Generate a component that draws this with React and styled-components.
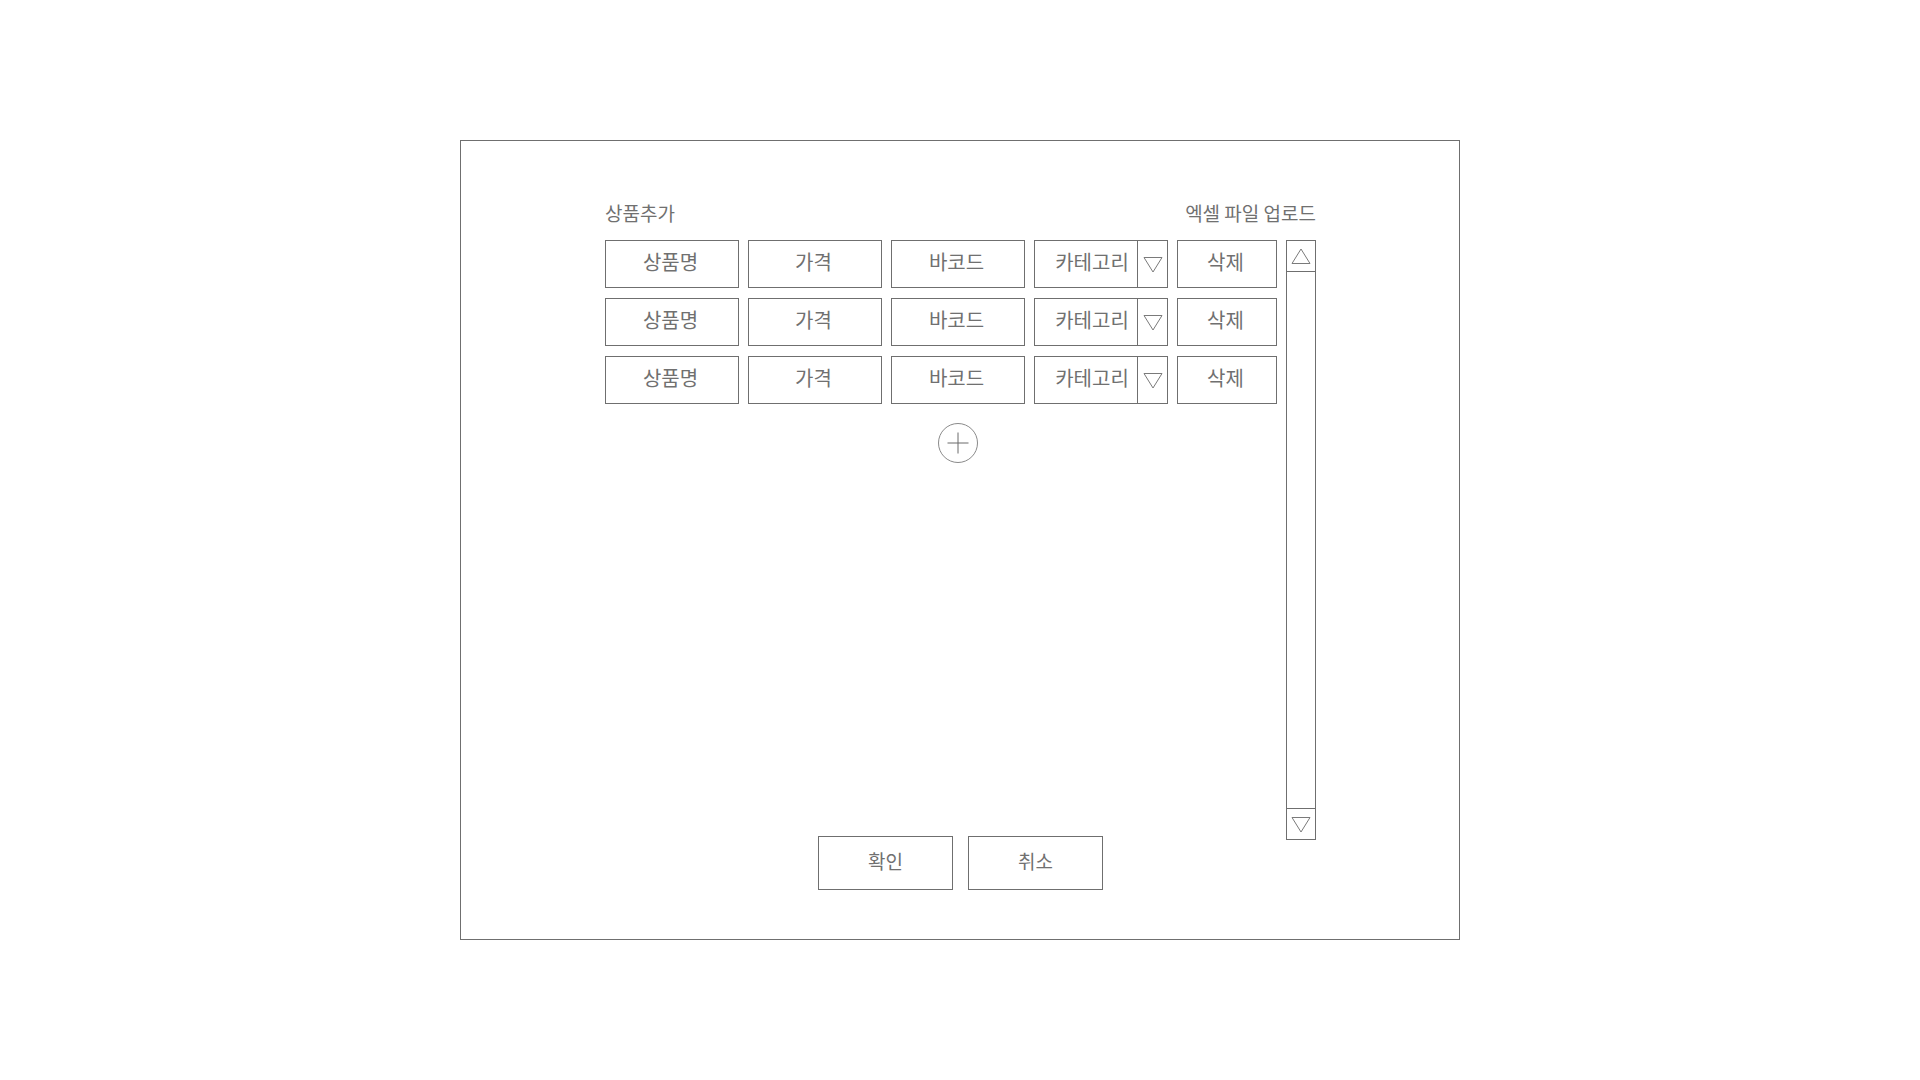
import React from "react";
import styled, { createGlobalStyle } from "styled-components";

const GlobalStyle = createGlobalStyle`
  html, body {
    margin: 0;
    padding: 0;
    background: #ffffff;
  }
  body {
    font-family: "Noto Sans CJK KR", "Noto Sans", sans-serif;
    color: #707070;
  }
  * {
    box-sizing: border-box;
  }
`;

const Page = styled.div`
  width: 100vw;
  height: 100vh;
  display: flex;
  align-items: center;
  justify-content: center;
`;

const Panel = styled.section`
  width: 1000px;
  height: 800px;
  border: 1px solid #6f6f6f;
  padding: 59px 144px 49px;
  display: grid;
  grid-template-columns: 1fr 30px;
  grid-template-rows: auto 1fr auto;
  column-gap: 9px;
`;

const Header = styled.div`
  grid-column: 1 / -1;
  grid-row: 1;
  display: flex;
  justify-content: space-between;
  align-items: center;
  height: 26px;
  margin-bottom: 14px;
  font-size: 19px;
  line-height: 26px;
  color: #707070;
`;

const HeaderTitle = styled.span``;

const UploadLink = styled.span`
  cursor: pointer;
`;

const List = styled.div`
  grid-column: 1;
  grid-row: 2;
  display: flex;
  flex-direction: column;
  gap: 10px;
`;

const Row = styled.div`
  display: grid;
  grid-template-columns: 134px 134px 134px 134px 100px;
  column-gap: 9px;
`;

const Cell = styled.div`
  height: 48px;
  border: 1px solid #6f6f6f;
  display: flex;
  align-items: center;
  justify-content: center;
  font-size: 20px;
  padding: 0 3px 5px 0;
  color: #707070;
  cursor: ${(p) => (p.$button ? "pointer" : "text")};
`;

const SelectBox = styled.div`
  height: 48px;
  border: 1px solid #6f6f6f;
  display: flex;
  font-size: 20px;
  color: #707070;
`;

const SelectLabel = styled.div`
  flex: 1;
  display: flex;
  align-items: center;
  justify-content: center;
  padding: 0 0 5px 12px;
`;

const SelectArrow = styled.div`
  width: 30px;
  border-left: 1px solid #6f6f6f;
  display: flex;
  align-items: center;
  justify-content: center;
  padding-top: 1px;
`;

const AddRow = styled(Row)`
  margin-top: 9px;
`;

const AddButton = styled.button`
  grid-column: 3;
  justify-self: center;
  width: 40px;
  height: 40px;
  border-radius: 50%;
  border: 1px solid #8a8a8a;
  background: #ffffff;
  padding: 0;
  display: flex;
  align-items: center;
  justify-content: center;
  cursor: pointer;
`;

const Scrollbar = styled.div`
  grid-column: 2;
  grid-row: 2 / 4;
  align-self: start;
  height: 600px;
  border: 1px solid #6f6f6f;
  display: flex;
  flex-direction: column;
`;

const ScrollButton = styled.div`
  height: 31px;
  display: flex;
  align-items: center;
  justify-content: center;
  border-top: ${(p) => (p.$bottom ? "1px solid #6f6f6f" : "none")};
  border-bottom: ${(p) => (p.$bottom ? "none" : "1px solid #6f6f6f")};
`;

const ScrollTrack = styled.div`
  flex: 1;
`;

const Footer = styled.div`
  grid-column: 1 / -1;
  grid-row: 3;
  display: flex;
  justify-content: center;
  gap: 15px;
`;

const FooterButton = styled.button`
  width: 135px;
  height: 54px;
  border: 1px solid #6f6f6f;
  background: #ffffff;
  font-family: "Noto Sans CJK KR", "Noto Sans", sans-serif;
  font-size: 19px;
  color: #707070;
  padding: 0 0 6px;
  cursor: pointer;
`;

const TriangleDown = () => (
  <svg width="20" height="17" viewBox="0 0 20 17">
    <polygon points="1,1.5 19,1.5 10,16" fill="none" stroke="#7a7a7a" strokeWidth="1" />
  </svg>
);

const TriangleUp = () => (
  <svg width="20" height="17" viewBox="0 0 20 17">
    <polygon points="10,1 19,15.5 1,15.5" fill="none" stroke="#7a7a7a" strokeWidth="1" />
  </svg>
);

const PlusIcon = () => (
  <svg width="22" height="22" viewBox="0 0 22 22">
    <line x1="11" y1="0.5" x2="11" y2="21.5" stroke="#6a6a6a" strokeWidth="1" />
    <line x1="0.5" y1="11" x2="21.5" y2="11" stroke="#6a6a6a" strokeWidth="1" />
  </svg>
);

const rows = [1, 2, 3];

export default function App() {
  return (
    <>
      <GlobalStyle />
      <Page>
        <Panel>
          <Header>
            <HeaderTitle>상품추가</HeaderTitle>
            <UploadLink>엑셀 파일 업로드</UploadLink>
          </Header>

          <List>
            {rows.map((id) => (
              <Row key={id}>
                <Cell>상품명</Cell>
                <Cell>가격</Cell>
                <Cell>바코드</Cell>
                <SelectBox>
                  <SelectLabel>카테고리</SelectLabel>
                  <SelectArrow>
                    <TriangleDown />
                  </SelectArrow>
                </SelectBox>
                <Cell $button>삭제</Cell>
              </Row>
            ))}
            <AddRow>
              <AddButton aria-label="add">
                <PlusIcon />
              </AddButton>
            </AddRow>
          </List>

          <Scrollbar>
            <ScrollButton>
              <TriangleUp />
            </ScrollButton>
            <ScrollTrack />
            <ScrollButton $bottom>
              <TriangleDown />
            </ScrollButton>
          </Scrollbar>

          <Footer>
            <FooterButton>확인</FooterButton>
            <FooterButton>취소</FooterButton>
          </Footer>
        </Panel>
      </Page>
    </>
  );
}
